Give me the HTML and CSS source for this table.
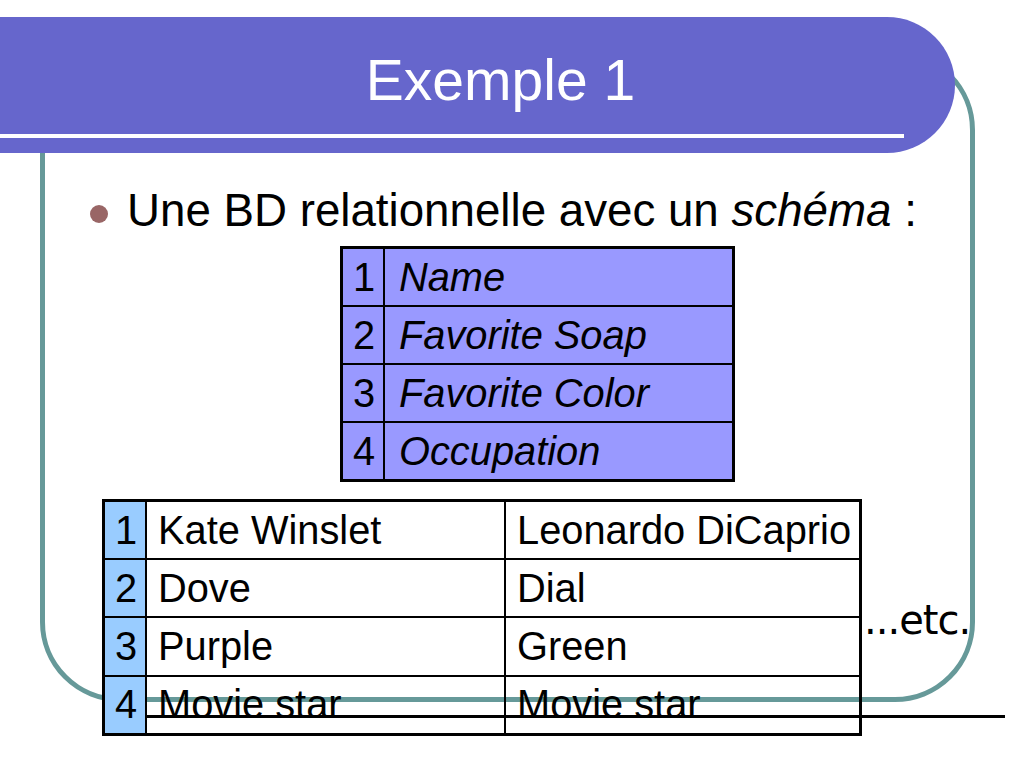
FILE: index.html
```html
<!DOCTYPE html>
<html lang="fr">
<head>
<meta charset="utf-8">
<title>Exemple 1</title>
<link rel="stylesheet" href="styles.css">
</head>
<body>
<div class="slide">
  <div class="frame"></div>
  <header class="titlebar">
    <h1 class="title">Exemple 1</h1>
    <div class="title-rule"></div>
  </header>
  <ul class="bullets">
    <li class="bullet"><span class="dot"></span><span>Une BD relationnelle avec un <em>schéma</em> :</span></li>
  </ul>
  <table class="schema">
    <tr><td class="num">1</td><td class="field">Name</td></tr>
    <tr><td class="num">2</td><td class="field">Favorite Soap</td></tr>
    <tr><td class="num">3</td><td class="field">Favorite Color</td></tr>
    <tr><td class="num">4</td><td class="field">Occupation</td></tr>
  </table>
  <table class="data">
    <tr><td class="num">1</td><td class="val first">Kate Winslet</td><td class="val">Leonardo DiCaprio</td></tr>
    <tr><td class="num">2</td><td class="val first">Dove</td><td class="val">Dial</td></tr>
    <tr><td class="num">3</td><td class="val first">Purple</td><td class="val">Green</td></tr>
    <tr><td class="num">4</td><td class="val first">Movie star</td><td class="val">Movie star</td></tr>
  </table>
  <div class="etc">...etc.</div>
  <div class="strike-line"></div>
</div>
</body>
</html>
```

FILE: styles.css
```css
html, body {
  margin: 0;
  padding: 0;
  background: #ffffff;
}

.slide {
  position: relative;
  width: 1024px;
  height: 768px;
  overflow: hidden;
  padding-top: 17px;
  box-sizing: border-box;
  font-family: "Liberation Sans", Arial, sans-serif;
  color: #000;
  isolation: isolate;
}

.frame {
  position: absolute;
  left: 40px;
  top: 50px;
  width: 935px;
  height: 652px;
  box-sizing: border-box;
  border: 5px solid #669999;
  border-radius: 80px;
  z-index: -1;
}

.titlebar {
  position: relative;
  width: 955px;
  height: 136px;
  background: #6666cc;
  border-radius: 0 68px 68px 0;
  display: flex;
  flex-direction: column;
}

.title {
  margin: 0;
  padding: 31px 0 0 46px;
  font-weight: normal;
  font-size: 57px;
  line-height: 64px;
  color: #ffffff;
  text-align: center;
}

.title-rule {
  margin-top: 22px;
  width: 904px;
  height: 4px;
  background: #ffffff;
}

.bullets {
  list-style: none;
  margin: 32px 0 0 0;
  padding: 0 0 0 90px;
}

.bullet {
  display: flex;
  align-items: center;
  gap: 19px;
  font-size: 45.7px;
  line-height: 52px;
}

.bullet em {
  font-style: italic;
}

.dot {
  width: 18px;
  height: 18px;
  border-radius: 50%;
  background: #996666;
  margin-top: 6px;
  flex: none;
}

table {
  border-collapse: collapse;
  font-size: 39.8px;
}

td {
  border: 2px solid #000;
  padding: 0 0 0 11px;
  vertical-align: middle;
  white-space: nowrap;
}

.schema {
  margin: 9px 0 0 340px;
  width: 395px;
  border: 3px solid #000;
  background: #9999ff;
}

.schema td {
  height: 56px;
}

.schema .num {
  width: 30px;
  padding-left: 10px;
}

.schema .field {
  font-style: italic;
  padding-left: 14px;
}

.data {
  margin: 17px 0 0 102px;
  width: 760px;
  border: 3px solid #000;
}

.data td {
  height: 56.2px;
}

.data .num {
  width: 30px;
  padding-left: 10px;
  background: #99ccff;
}

.data .first {
  width: 346px;
}

.etc {
  position: absolute;
  left: 864px;
  top: 596px;
  font-family: "DejaVu Sans", sans-serif;
  font-size: 40px;
  line-height: 48px;
  letter-spacing: -1px;
}

.strike-line {
  position: absolute;
  left: 147px;
  top: 715px;
  width: 858px;
  height: 3px;
  background: #000;
}
```
